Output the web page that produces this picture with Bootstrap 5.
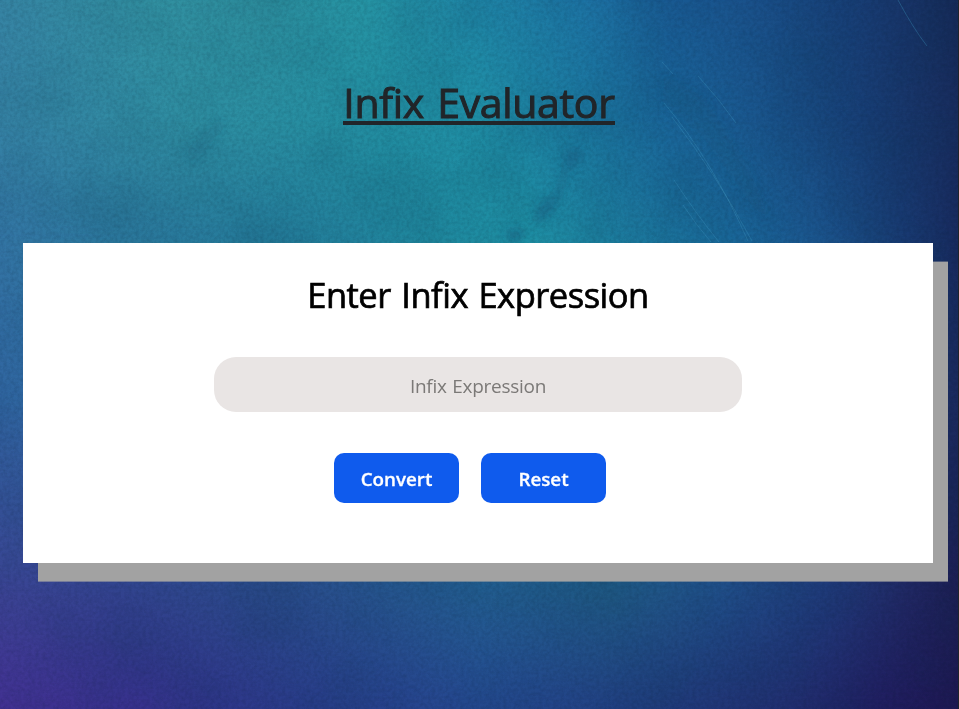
<!DOCTYPE html>
<html lang="en">
<head>
<meta charset="utf-8">
<meta name="viewport" content="width=device-width, initial-scale=1">
<title>Infix Evaluator</title>
<link href="https://cdn.jsdelivr.net/npm/bootstrap@5.3.0/dist/css/bootstrap.min.css" rel="stylesheet">
<style>
  body { font-family: "Segoe UI", "Open Sans", "Noto Sans", sans-serif; background: #1c5c90; border-right: 1px solid #20242b; }
  .backdrop { inset: 0; z-index: -1; width: 958px; height: 709px; }
  .page-title { margin-top: 77px; font-size: 41px; line-height: 50px; font-weight: 500; color: #212529; -webkit-text-stroke: 1px #212529; }
  .page-title span { display: inline-block; height: 48px; border-bottom: 4px solid #212529; letter-spacing: -.33px; word-spacing: 3px; }
  .panel { width: 910px; height: 320px; margin: 116px 0 0 23px; background: #fff; box-shadow: 15px 18.6px 0 #a2a2a2; }
  .panel-title { margin: 30px 0 0; font-size: 34.5px; line-height: 44px; font-weight: 500; color: #000; letter-spacing: -.5px; word-spacing: 2px; -webkit-text-stroke: .7px #000; }
  .expr { width: 528px; height: 55px; margin-top: 40px; border: 0; border-radius: 22px; background: #e9e5e4; font-size: 19px; letter-spacing: -.28px; word-spacing: 1px; padding: 2px 0 0; outline: 0; }
  .expr::placeholder { color: #7b7977; opacity: 1; }
  .actions { margin: 41px 16px 0 0; gap: 22px; }
  .action { width: 125px; height: 50px; border: 0; border-radius: 10px; background: #0f5bed; color: #fff; font-size: 18.8px; font-weight: 600; padding: 2px 0 0; -webkit-text-stroke: .3px #fff; }
</style>
<script src="https://cdn.jsdelivr.net/npm/bootstrap@5.3.0/dist/js/bootstrap.bundle.min.js"></script>
</head>
<body class="vh-100 overflow-hidden position-relative">
<svg class="backdrop position-absolute" viewBox="0 0 958 709" aria-hidden="true">
  <defs>
    <linearGradient id="r0"><stop offset="0" stop-color="#3684a3"/><stop offset=".16" stop-color="#3291a2"/><stop offset=".27" stop-color="#2d8d9d"/><stop offset=".38" stop-color="#2694a4"/><stop offset=".5" stop-color="#1f84a5"/><stop offset=".61" stop-color="#1d74a4"/><stop offset=".7" stop-color="#1a5c95"/><stop offset=".8" stop-color="#1a4f88"/><stop offset=".9" stop-color="#183d74"/><stop offset="1" stop-color="#182b5a"/></linearGradient>
    <linearGradient id="r1"><stop offset="0" stop-color="#3684a6"/><stop offset=".2" stop-color="#2f8fa2"/><stop offset=".4" stop-color="#228ea1"/><stop offset=".5" stop-color="#2090a7"/><stop offset=".6" stop-color="#1c7aa0"/><stop offset=".7" stop-color="#1a6599"/><stop offset=".78" stop-color="#1a588f"/><stop offset=".9" stop-color="#183f76"/><stop offset="1" stop-color="#182d5e"/></linearGradient>
    <linearGradient id="r2"><stop offset="0" stop-color="#3375a4"/><stop offset=".12" stop-color="#2c789d"/><stop offset=".32" stop-color="#237d9a"/><stop offset=".45" stop-color="#20899f"/><stop offset=".55" stop-color="#1f91a5"/><stop offset=".66" stop-color="#1c789c"/><stop offset=".76" stop-color="#1a6899"/><stop offset=".85" stop-color="#1b568e"/><stop offset=".94" stop-color="#193c74"/><stop offset="1" stop-color="#182b5f"/></linearGradient>
    <linearGradient id="r3"><stop offset="0" stop-color="#3065a0"/><stop offset=".5" stop-color="#1f7596"/><stop offset="1" stop-color="#1b2b5f"/></linearGradient>
    <linearGradient id="r4"><stop offset="0" stop-color="#3b4494"/><stop offset=".12" stop-color="#32438e"/><stop offset=".3" stop-color="#2a4c8b"/><stop offset=".5" stop-color="#235e91"/><stop offset=".64" stop-color="#205a86"/><stop offset=".75" stop-color="#204f89"/><stop offset=".86" stop-color="#213c7d"/><stop offset=".95" stop-color="#202863"/><stop offset="1" stop-color="#1d1f54"/></linearGradient>
    <linearGradient id="r5"><stop offset="0" stop-color="#433193"/><stop offset=".15" stop-color="#36318c"/><stop offset=".3" stop-color="#2a3b89"/><stop offset=".5" stop-color="#254990"/><stop offset=".66" stop-color="#213f80"/><stop offset=".82" stop-color="#212f70"/><stop offset=".92" stop-color="#201e60"/><stop offset="1" stop-color="#1f1853"/></linearGradient>
    <linearGradient id="fade" x2="0" y2="1"><stop offset="0" stop-color="#fff" stop-opacity="0"/><stop offset="1" stop-color="#fff"/></linearGradient>
    <mask id="m1" maskUnits="userSpaceOnUse" x="0" y="0" width="958" height="709"><rect width="958" height="120" fill="url(#fade)"/><rect y="120" width="958" height="589" fill="#fff"/></mask>
    <mask id="m2" maskUnits="userSpaceOnUse" x="0" y="0" width="958" height="709"><rect y="120" width="958" height="120" fill="url(#fade)"/><rect y="240" width="958" height="469" fill="#fff"/></mask>
    <mask id="m3" maskUnits="userSpaceOnUse" x="0" y="0" width="958" height="709"><rect y="240" width="958" height="160" fill="url(#fade)"/><rect y="400" width="958" height="309" fill="#fff"/></mask>
    <mask id="m4" maskUnits="userSpaceOnUse" x="0" y="0" width="958" height="709"><rect y="400" width="958" height="190" fill="url(#fade)"/><rect y="590" width="958" height="119" fill="#fff"/></mask>
    <mask id="m5" maskUnits="userSpaceOnUse" x="0" y="0" width="958" height="709"><rect y="590" width="958" height="119" fill="url(#fade)"/></mask>
    <filter id="grain" x="0" y="0" width="1" height="1" color-interpolation-filters="sRGB"><feTurbulence type="fractalNoise" baseFrequency=".28" numOctaves="3" seed="4"/><feColorMatrix values="0 0 0 0 0  0 0 0 0 .08  0 0 0 0 .15  .8 0 0 0 -.28"/></filter>
    <filter id="cloud" x="0" y="0" width="1" height="1" color-interpolation-filters="sRGB"><feTurbulence type="fractalNoise" baseFrequency=".013" numOctaves="4" seed="9"/><feColorMatrix values="0 0 0 0 .03  0 0 0 0 .2  0 0 0 0 .3  1.4 0 0 0 -.6"/></filter>
    <filter id="soft" x="-.3" y="-.3" width="1.6" height="1.6"><feGaussianBlur stdDeviation="4"/></filter>
  </defs>
  <rect width="958" height="709" fill="url(#r0)"/>
  <rect width="958" height="709" fill="url(#r1)" mask="url(#m1)"/>
  <rect width="958" height="709" fill="url(#r2)" mask="url(#m2)"/>
  <rect width="958" height="709" fill="url(#r3)" mask="url(#m3)"/>
  <rect width="958" height="709" fill="url(#r4)" mask="url(#m4)"/>
  <rect width="958" height="709" fill="url(#r5)" mask="url(#m5)"/>
  <rect width="958" height="709" filter="url(#cloud)" opacity=".18"/>
  <g fill="#15557a" opacity=".4" filter="url(#soft)">
    <path d="M566 148l18 2-5 14-12 8-6 22-8 20-18 10 2-18 18-14 8-20zM505 230l14-3 8 9-18 8z"/>
    <path d="M185 150l35-32 8 6-35 40z" opacity=".35"/>
    <path d="M664 75l40 22 45 70 22 55-18-15-50-70-40-35z" opacity=".5"/>
  </g>
  <g fill="none" stroke="#3b8fb8" stroke-width="1" opacity=".4">
    <path d="M662 62l11 12M664 103q47 55 84 138M672 117q44 57 80 124M674 180q23 35 45 62M683 205q13 20 28 37M698 76q22 24 38 47M898 0q15 28 29 46"/>
  </g>
  <rect width="958" height="709" filter="url(#grain)" opacity=".3"/>
</svg>
<main class="d-flex flex-column">
  <h1 class="page-title text-center mb-0"><span>Infix Evaluator</span></h1>
  <section class="panel d-flex flex-column align-items-center">
    <h2 class="panel-title">Enter Infix Expression</h2>
    <input class="expr text-center" type="text" placeholder="Infix Expression" aria-label="Infix Expression">
    <div class="actions d-flex">
      <button class="action" type="button">Convert</button>
      <button class="action" type="reset">Reset</button>
    </div>
  </section>
</main>
</body>
</html>
